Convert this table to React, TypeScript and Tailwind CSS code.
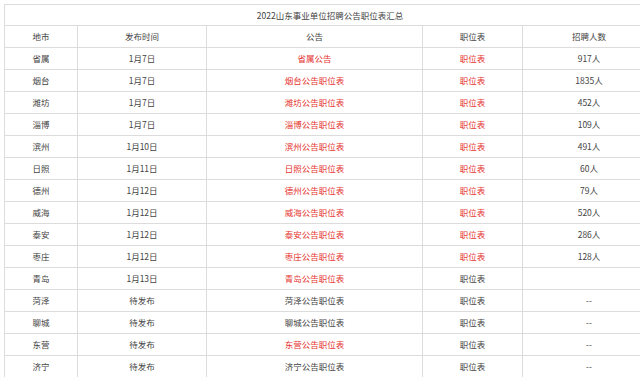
type Row = {
  city: string;
  date: string;
  notice: string;
  noticeRed: boolean;
  tableRed: boolean;
  count: string;
};

const rows: Row[] = [
  { city: "省属", date: "1月7日", notice: "省属公告", noticeRed: true, tableRed: true, count: "917人" },
  { city: "烟台", date: "1月7日", notice: "烟台公告职位表", noticeRed: true, tableRed: true, count: "1835人" },
  { city: "潍坊", date: "1月7日", notice: "潍坊公告职位表", noticeRed: true, tableRed: true, count: "452人" },
  { city: "淄博", date: "1月7日", notice: "淄博公告职位表", noticeRed: true, tableRed: true, count: "109人" },
  { city: "滨州", date: "1月10日", notice: "滨州公告职位表", noticeRed: true, tableRed: true, count: "491人" },
  { city: "日照", date: "1月11日", notice: "日照公告职位表", noticeRed: true, tableRed: true, count: "60人" },
  { city: "德州", date: "1月12日", notice: "德州公告职位表", noticeRed: true, tableRed: true, count: "79人" },
  { city: "威海", date: "1月12日", notice: "威海公告职位表", noticeRed: true, tableRed: true, count: "520人" },
  { city: "泰安", date: "1月12日", notice: "泰安公告职位表", noticeRed: true, tableRed: true, count: "286人" },
  { city: "枣庄", date: "1月12日", notice: "枣庄公告职位表", noticeRed: true, tableRed: true, count: "128人" },
  { city: "青岛", date: "1月13日", notice: "青岛公告职位表", noticeRed: true, tableRed: false, count: "" },
  { city: "菏泽", date: "待发布", notice: "菏泽公告职位表", noticeRed: false, tableRed: false, count: "--" },
  { city: "聊城", date: "待发布", notice: "聊城公告职位表", noticeRed: false, tableRed: false, count: "--" },
  { city: "东营", date: "待发布", notice: "东营公告职位表", noticeRed: true, tableRed: false, count: "--" },
  { city: "济宁", date: "待发布", notice: "济宁公告职位表", noticeRed: false, tableRed: false, count: "--" },
];

const cell = "border border-[#dcdcdc] h-[22px] p-0 text-center align-middle";

export default function App() {
  return (
    <div className="w-[640px] h-[377px] overflow-hidden bg-white pt-[4px] pl-[4px] font-['Noto_Sans_CJK_SC',sans-serif] text-[8.5px] text-[#444]">
      <table className="w-[651px] border-collapse table-fixed">
        <colgroup>
          <col className="w-[73px]" />
          <col className="w-[129px]" />
          <col className="w-[216px]" />
          <col className="w-[100px]" />
          <col className="w-[133px]" />
        </colgroup>
        <tbody>
          <tr>
            <td colSpan={5} className="border border-[#dcdcdc] h-[21px] p-0 text-center align-middle">
              2022山东事业单位招聘公告职位表汇总
            </td>
          </tr>
          <tr>
            <td className={cell}>地市</td>
            <td className={cell}>发布时间</td>
            <td className={cell}>公告</td>
            <td className={cell}>职位表</td>
            <td className={cell}>招聘人数</td>
          </tr>
          {rows.map((r) => (
            <tr key={r.city}>
              <td className={cell}>{r.city}</td>
              <td className={cell}>{r.date}</td>
              <td className={`${cell} ${r.noticeRed ? "text-[#e5342f]" : ""}`}>{r.notice}</td>
              <td className={`${cell} ${r.tableRed ? "text-[#e5342f]" : ""}`}>职位表</td>
              <td className={cell}>{r.count}</td>
            </tr>
          ))}
        </tbody>
      </table>
    </div>
  );
}
